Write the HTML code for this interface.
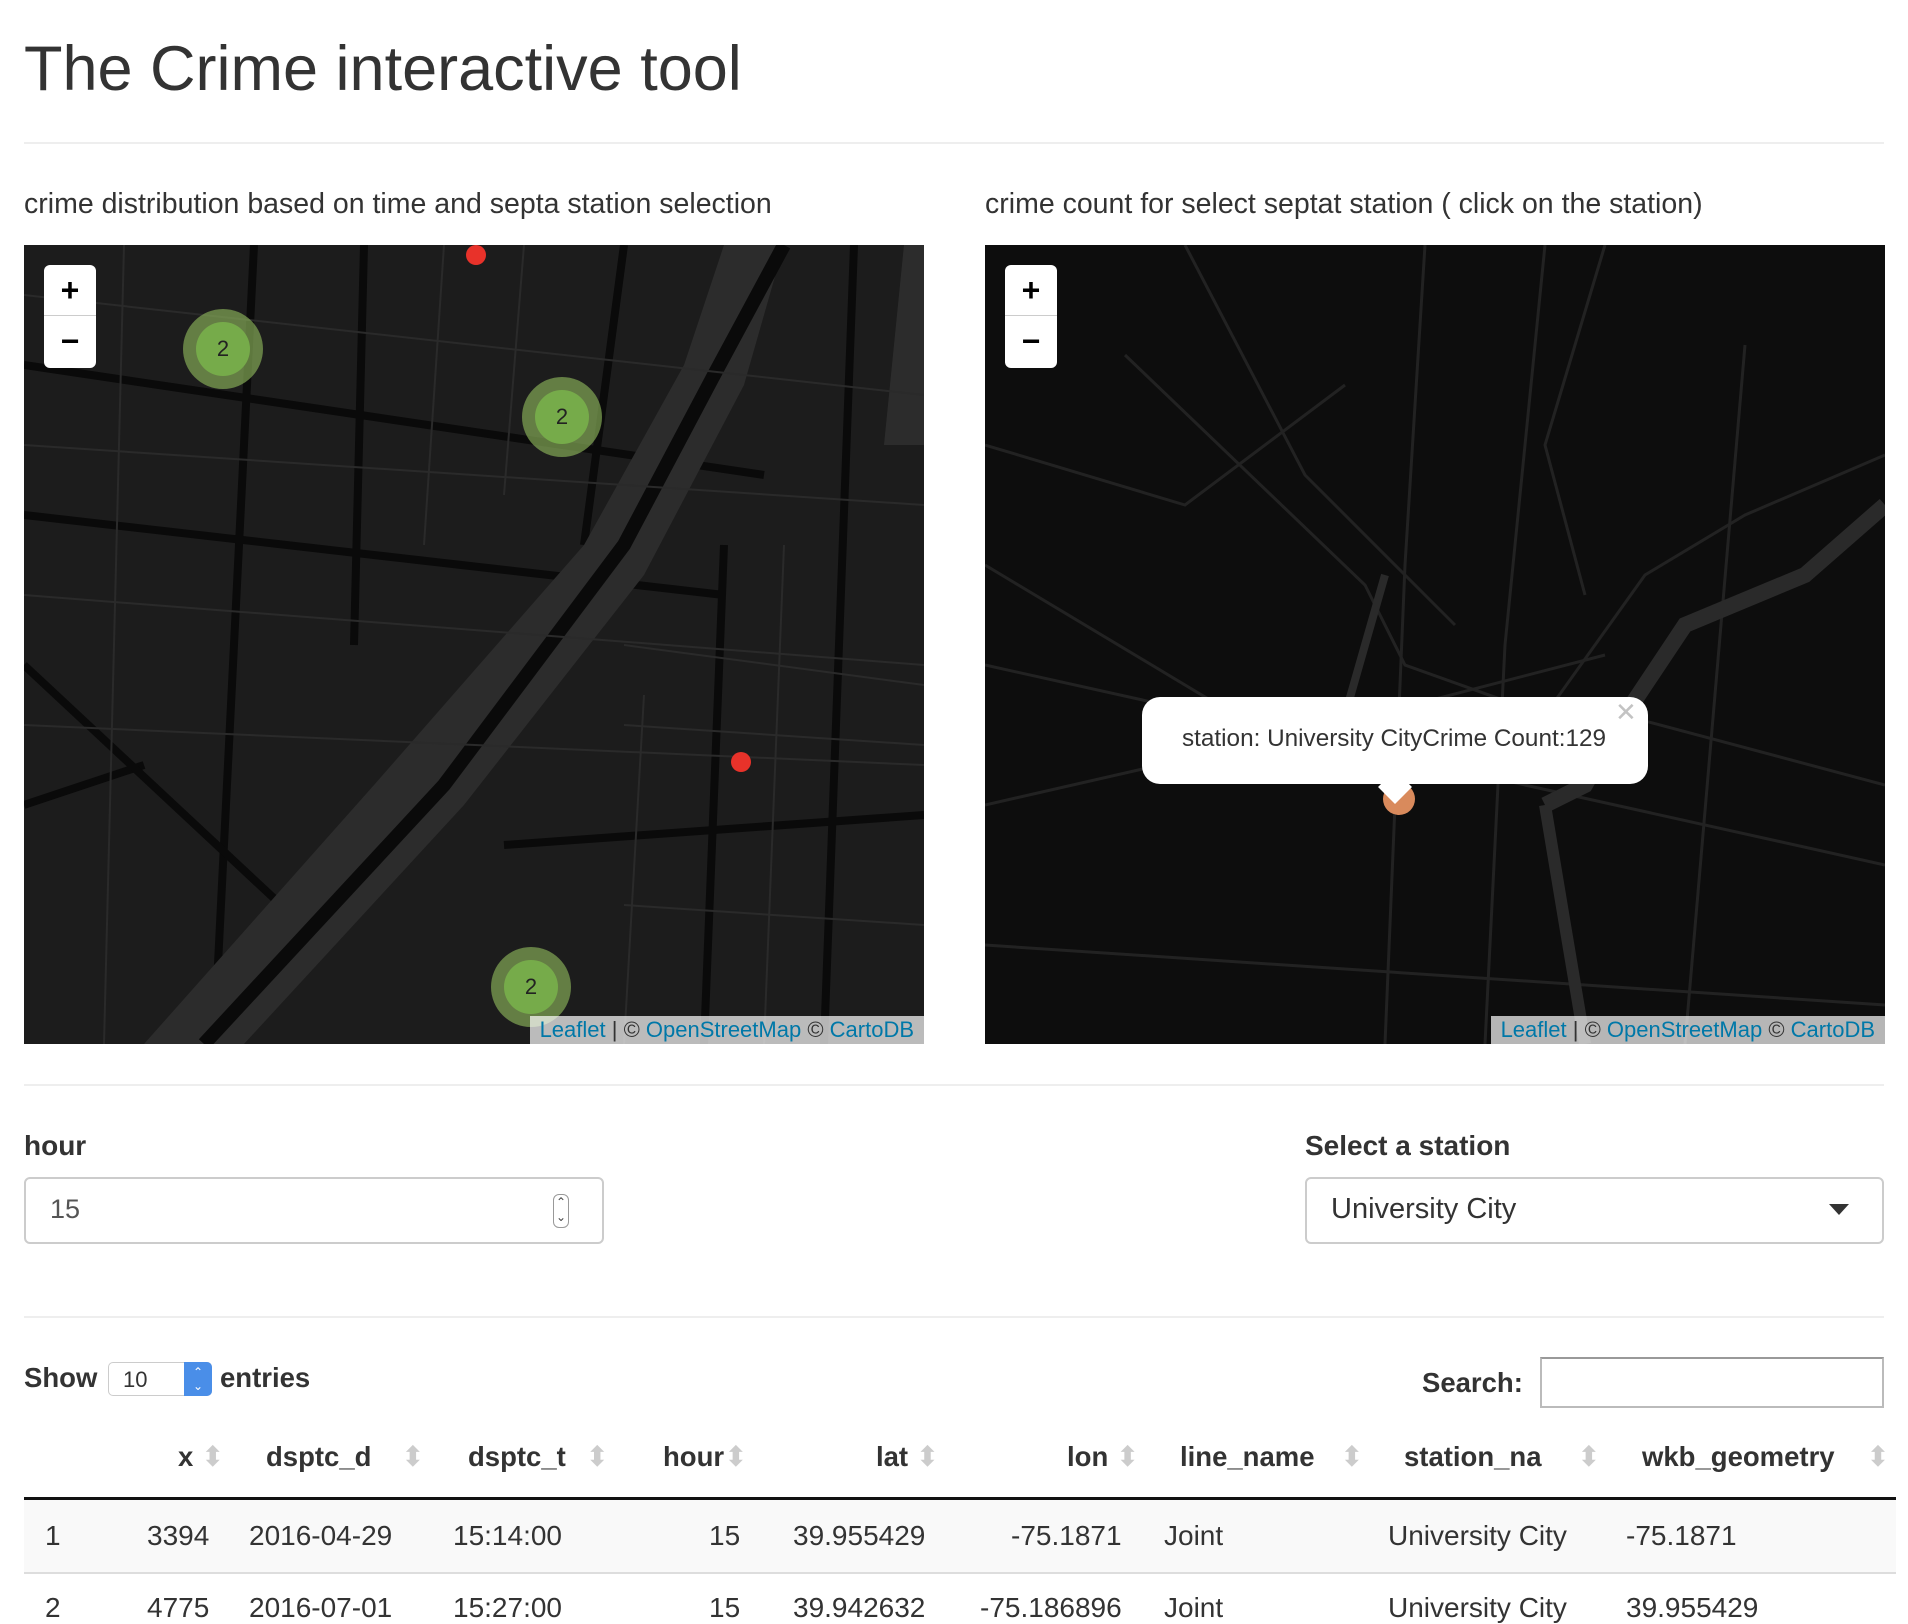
<!DOCTYPE html>
<html><head><meta charset="utf-8"><style>
*{box-sizing:border-box;margin:0;padding:0}
body{width:1908px;height:1618px;background:#fff;font-family:"Liberation Sans",Arial,sans-serif;color:#333;position:relative;overflow:hidden}
.a{position:absolute;white-space:nowrap}
.hr{position:absolute;left:24px;width:1860px;height:2px;background:#eee}
.map{position:absolute;top:245px;width:900px;height:799px;overflow:hidden}
.zoom{position:absolute;left:20px;top:20px;width:52px;height:103px;background:#fff;border-radius:6px;}
.zoom div{height:51px;text-align:center;font:bold 32px "Liberation Sans",sans-serif;line-height:51px;color:#000}
.attr{position:absolute;right:0;bottom:0;background:rgba(255,255,255,0.7);font-size:22px;padding:1px 10px;color:#333}
.attr span{color:#0078a8}
.cl{position:absolute;width:80px;height:80px;border-radius:50%;background:rgba(140,180,90,0.65)}
.cl div{position:absolute;left:13px;top:13px;width:54px;height:54px;border-radius:50%;background:#76ab4a;text-align:center;line-height:54px;font-size:22px;color:#222}
.rd{position:absolute;width:20px;height:20px;border-radius:50%;background:#e8322a}
.th{position:absolute;top:1440px;font-weight:bold;font-size:27.5px}
.ar{color:#ccc;font-size:28px;font-weight:normal}
.td{position:absolute;font-size:28px}
</style></head><body>
<div class="a" style="left:24px;top:33px;font-size:63px;color:#333">The Crime interactive tool</div>
<div class="hr" style="top:142px"></div>
<div class="a" style="left:24px;top:188px;font-size:28.5px">crime distribution based on time and septa station selection</div>
<div class="a" style="left:985px;top:188px;font-size:28.5px">crime count for select septat station ( click on the station)</div>

<div class="map" style="left:24px;background:#1c1c1c">
<svg width="900" height="799" style="position:absolute;left:0;top:0">
<g stroke="#0a0a0a" stroke-width="8" fill="none">
<path d="M0 120 L740 230"/><path d="M0 270 L700 350"/><path d="M0 560 L120 520"/><path d="M230 0 L190 799"/><path d="M340 0 L330 400"/><path d="M600 0 L560 300"/><path d="M0 420 L300 700"/><path d="M480 600 L900 570"/><path d="M830 0 L800 799"/><path d="M700 300 L680 799"/>
</g>
<path d="M760 0 L720 140 L620 330 L440 560 L220 799 L120 799 L350 540 L560 300 L660 120 L700 0Z" fill="#2c2c2c"/>
<path d="M880 0 L900 0 L900 200 L860 200Z" fill="#2c2c2c"/>
<path d="M760 0 L690 130 L600 300 L420 540 L180 799" stroke="#0a0a0a" stroke-width="14" fill="none"/>
<g stroke="#2a2a2a" stroke-width="2" fill="none">
<path d="M0 50 L900 150"/><path d="M0 200 L900 260"/><path d="M0 350 L900 420"/><path d="M0 480 L900 520"/><path d="M600 400 L900 440"/><path d="M600 480 L900 500"/><path d="M600 660 L900 680"/><path d="M100 0 L80 799"/><path d="M420 0 L400 300"/><path d="M500 0 L480 250"/><path d="M760 300 L740 799"/><path d="M620 450 L600 799"/>
</g></svg>
<div class="zoom"><div style="border-bottom:1px solid #ccc">+</div><div>−</div></div>
<div class="cl" style="left:159px;top:64px"><div>2</div></div>
<div class="cl" style="left:498px;top:132px"><div>2</div></div>
<div class="cl" style="left:467px;top:702px"><div>2</div></div>
<div class="rd" style="left:442px;top:0px"></div>
<div class="rd" style="left:707px;top:507px"></div>
<div class="attr"><span>Leaflet</span> | © <span>OpenStreetMap</span> © <span>CartoDB</span></div>
</div>

<div class="map" style="left:985px;background:#0d0d0d">
<svg width="900" height="799" style="position:absolute;left:0;top:0">
<g stroke="#222" stroke-width="3" fill="none">
<path d="M140 110 L380 340 L420 420 L560 470 L660 330 L760 270 L900 210"/><path d="M0 320 L300 500 L600 460 L900 540"/><path d="M0 560 L350 480 L620 410"/><path d="M200 0 L320 230 L470 380"/><path d="M440 0 L420 320 L400 799"/><path d="M560 0 L520 400 L500 799"/><path d="M760 100 L700 799"/><path d="M0 700 L900 760"/><path d="M0 200 L200 260 L360 140"/><path d="M620 0 L560 200 L600 350"/><path d="M0 420 L900 620"/>
</g>
<path d="M900 260 L820 330 L700 380 L640 470 L600 540 L560 560" stroke="#2a2a2a" stroke-width="16" fill="none"/>
<path d="M560 560 L580 680 L600 799" stroke="#2a2a2a" stroke-width="12" fill="none"/>
<path d="M400 330 L380 400 L360 470" stroke="#2a2a2a" stroke-width="8" fill="none"/>
</svg>
<div class="zoom"><div style="border-bottom:1px solid #ccc">+</div><div>−</div></div>
<div style="position:absolute;left:398px;top:538px;width:32px;height:32px;border-radius:50%;background:#d98a5c"></div>
<div style="position:absolute;left:157px;top:452px;width:506px;height:87px;background:#fff;border-radius:18px"></div>
<div style="position:absolute;left:398px;top:530px;width:24px;height:24px;background:#fff;transform:rotate(45deg)"></div>
<div class="a" style="left:197px;top:480px;font-size:24.3px;color:#333">station: University CityCrime Count:129</div>
<div class="a" style="left:630px;top:452px;font-size:26px;color:#c3c3c3">✕</div>
<div class="attr"><span>Leaflet</span> | © <span>OpenStreetMap</span> © <span>CartoDB</span></div>
</div>

<div class="hr" style="top:1084px"></div>
<div class="a" style="left:24px;top:1130px;font-size:28px;font-weight:bold">hour</div>
<div class="a" style="left:1305px;top:1130px;font-size:28px;font-weight:bold">Select a station</div>
<div class="a" style="left:24px;top:1177px;width:580px;height:67px;border:2px solid #ccc;border-radius:6px"></div>
<div class="a" style="left:50px;top:1194px;font-size:27px;color:#555">15</div>
<div class="a" style="left:553px;top:1194px;width:16px;height:34px;border:1px solid #999;border-radius:6px;font-size:12px;text-align:center;line-height:15px;color:#444">⌃<br>⌄</div>
<div class="a" style="left:1305px;top:1177px;width:579px;height:67px;border:2px solid #ccc;border-radius:6px"></div>
<div class="a" style="left:1331px;top:1193px;font-size:29px;color:#333">University City</div>
<div class="a" style="left:1829px;top:1204px;width:0;height:0;border-left:10px solid transparent;border-right:10px solid transparent;border-top:11px solid #333"></div>
<div class="hr" style="top:1316px"></div>

<div class="a" style="left:24px;top:1362px;font-size:27.5px;font-weight:bold">Show</div>
<div class="a" style="left:108px;top:1362px;width:104px;height:34px;border:1px solid #ccc;border-radius:5px;font-size:22px;padding:4px 14px">10</div>
<div class="a" style="left:184px;top:1362px;width:28px;height:34px;background:#4a8ee8;border-radius:0 5px 5px 0;color:#fff;font-size:12px;text-align:center;line-height:14px;padding-top:3px">⌃<br>⌄</div>
<div class="a" style="left:220px;top:1362px;font-size:27.5px;font-weight:bold">entries</div>
<div class="a" style="left:1422px;top:1367px;font-size:27.5px;font-weight:bold">Search:</div>
<div class="a" style="left:1540px;top:1357px;width:344px;height:51px;border:2px solid #bbb;border-top-color:#999"></div>

<div class="th" style="left:178px">x <span class="ar">⬍</span></div>
<div class="th" style="left:266px">dsptc_d <span class="ar" style="margin-left:22px">⬍</span></div>
<div class="th" style="left:468px">dsptc_t <span class="ar" style="margin-left:12px">⬍</span></div>
<div class="th" style="left:663px">hour<span class="ar">⬍</span></div>
<div class="th" style="left:876px">lat <span class="ar">⬍</span></div>
<div class="th" style="left:1067px">lon <span class="ar">⬍</span></div>
<div class="th" style="left:1180px">line_name <span class="ar" style="margin-left:18px">⬍</span></div>
<div class="th" style="left:1404px">station_na <span class="ar" style="margin-left:28px">⬍</span></div>
<div class="th" style="left:1642px">wkb_geometry <span class="ar" style="margin-left:24px">⬍</span></div>
<div class="a" style="left:24px;top:1497px;width:1872px;height:3px;background:#111"></div>
<div class="a" style="left:24px;top:1500px;width:1872px;height:74px;background:#f9f9f9;border-bottom:2px solid #ddd"></div>

<div class="td" style="left:45px;top:1520px">1</div>
<div class="td" style="left:147px;top:1520px">3394</div>
<div class="td" style="left:249px;top:1520px">2016-04-29</div>
<div class="td" style="left:453px;top:1520px">15:14:00</div>
<div class="td" style="left:709px;top:1520px">15</div>
<div class="td" style="left:793px;top:1520px">39.955429</div>
<div class="td" style="left:1011px;top:1520px">-75.1871</div>
<div class="td" style="left:1164px;top:1520px">Joint</div>
<div class="td" style="left:1388px;top:1520px">University City</div>
<div class="td" style="left:1626px;top:1520px">-75.1871</div>

<div class="td" style="left:45px;top:1592px">2</div>
<div class="td" style="left:147px;top:1592px">4775</div>
<div class="td" style="left:249px;top:1592px">2016-07-01</div>
<div class="td" style="left:453px;top:1592px">15:27:00</div>
<div class="td" style="left:709px;top:1592px">15</div>
<div class="td" style="left:793px;top:1592px">39.942632</div>
<div class="td" style="left:980px;top:1592px">-75.186896</div>
<div class="td" style="left:1164px;top:1592px">Joint</div>
<div class="td" style="left:1388px;top:1592px">University City</div>
<div class="td" style="left:1626px;top:1592px">39.955429</div>
</body></html>
